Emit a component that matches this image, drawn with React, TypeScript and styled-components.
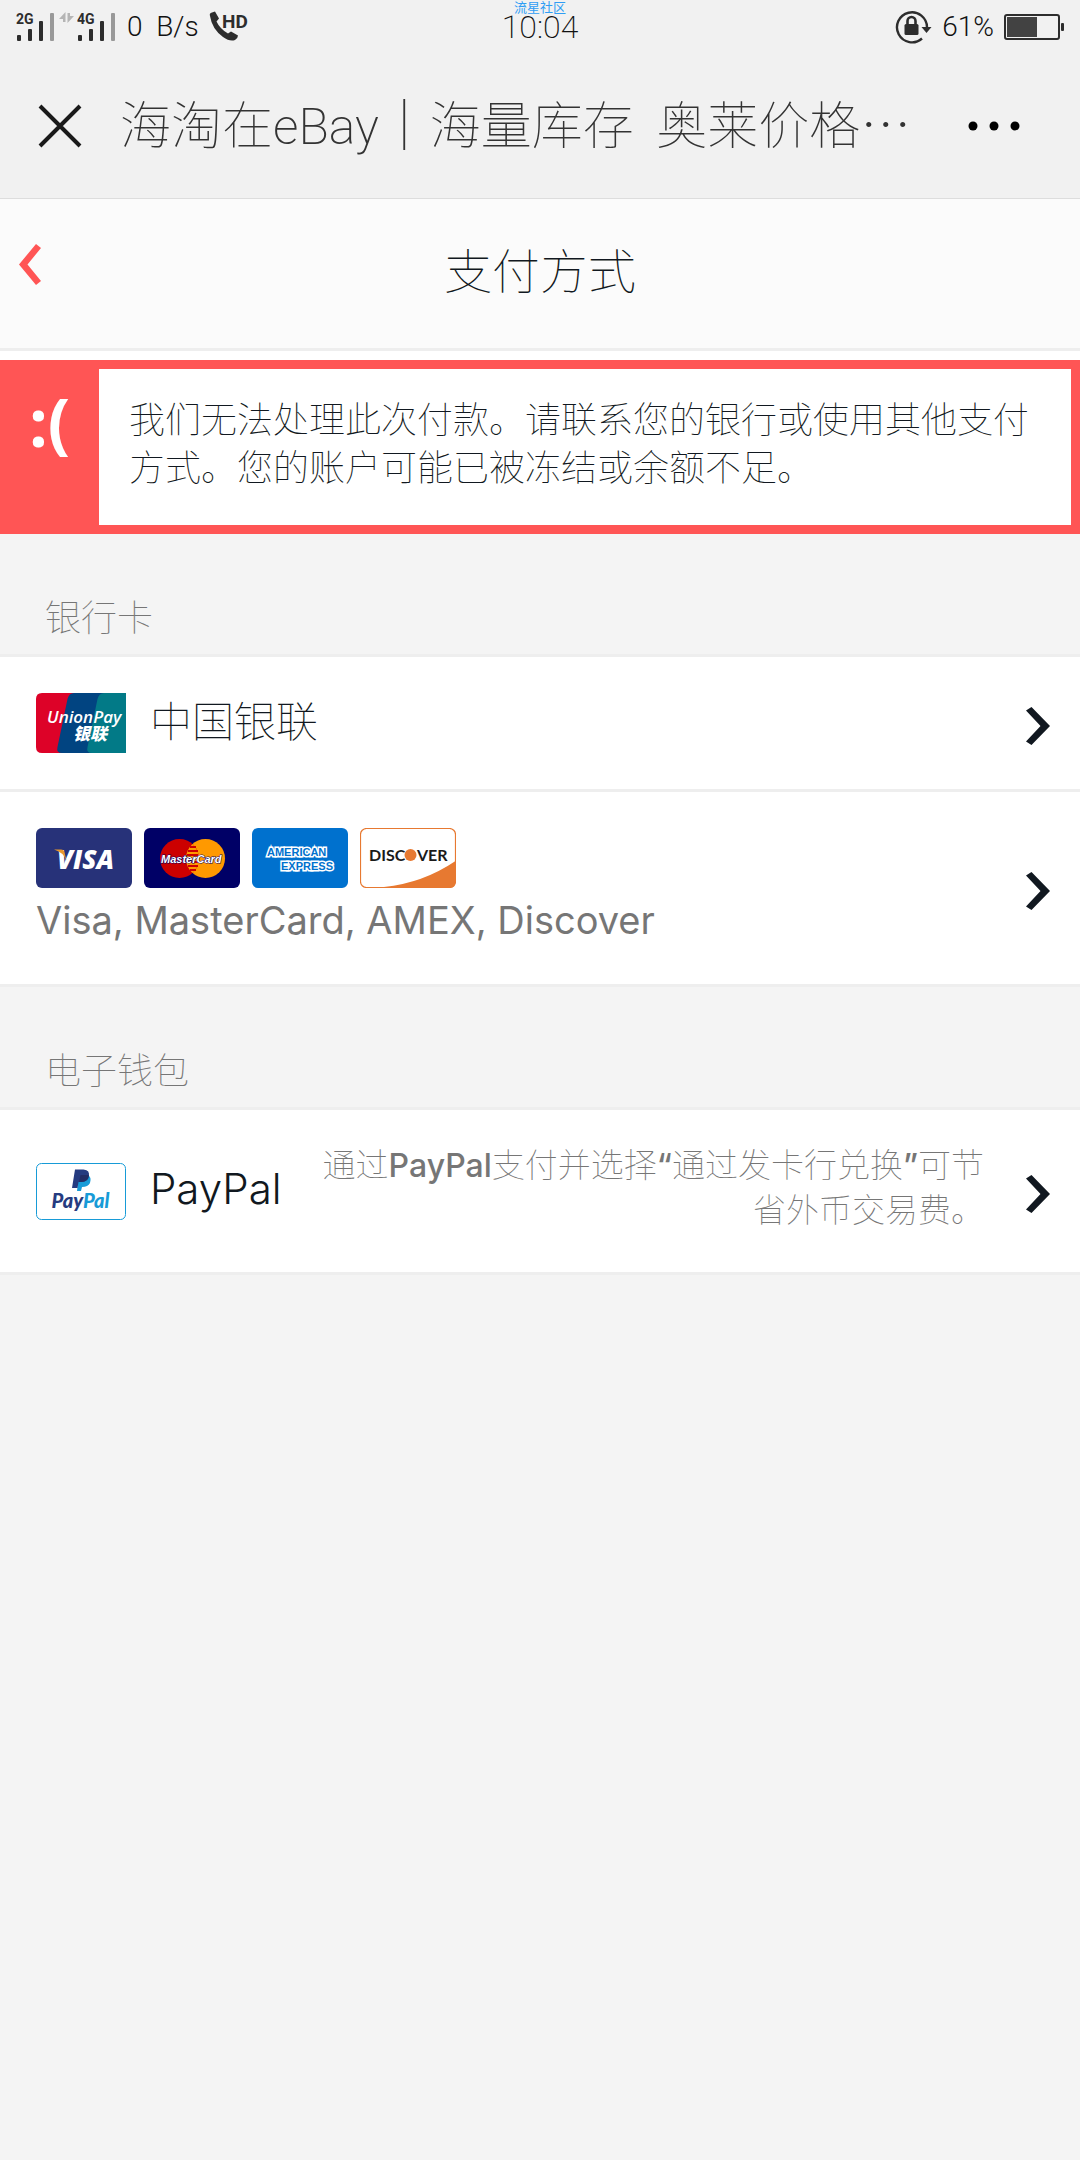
import React from "react";
import styled, { createGlobalStyle } from "styled-components";

const cjk = '"Noto Sans CJK SC", sans-serif';
const latin = 'Inter, "Noto Sans CJK SC", sans-serif';
const roboto = 'Roboto, "Noto Sans CJK SC", sans-serif';

const GlobalStyle = createGlobalStyle`
  *, *::before, *::after { box-sizing: border-box; }
  body {
    margin: 0;
    background: #f4f4f4;
    color: #111820;
    font-family: ${latin};
    font-weight: 100;
  }
  svg { display: block; flex: none; }
  h1, h2, p { margin: 0; font-weight: inherit; }
`;

const Page = styled.div`
  min-height: 100vh;
  background: #f4f4f4;
`;

const StatusBar = styled.div`
  display: grid;
  grid-template-columns: 1fr auto 1fr;
  height: 54px;
  padding: 0 16px;
  background: #f1f1f1;
  color: #111;
  font-family: ${roboto};
  font-size: 28px;
  font-weight: 300;
  line-height: 54px;
  white-space: pre;
`;

const StatusGroup = styled.div<{ $end?: boolean }>`
  display: flex;
  align-items: center;
  justify-content: ${(p) => (p.$end ? "flex-end" : "flex-start")};
  gap: 10px;
`;

const Clock = styled.div`
  position: relative;
  font-size: 32px;
  font-weight: 200;
`;

const Watermark = styled.span`
  position: absolute;
  top: 0;
  left: 50%;
  transform: translateX(-50%);
  color: #2f9df4;
  font-family: ${cjk};
  font-size: 13px;
  font-weight: 400;
  line-height: 13px;
`;

const BrowserBar = styled.header`
  display: flex;
  align-items: center;
  height: 145px;
  padding: 0 60px 0 36px;
  border-bottom: 1px solid #dddddd;
  background: #f1f1f1;
`;

const IconButton = styled.button`
  display: flex;
  align-items: center;
  justify-content: center;
  flex: none;
  padding: 0;
  border: 0;
  background: none;
  cursor: pointer;
`;

const PageTitle = styled.div`
  flex: 1;
  min-width: 0;
  padding: 0 0 3px 36px;
  color: #333;
  font-family: ${cjk};
  font-size: 51px;
  line-height: 72px;
  white-space: pre;
`;

const TitleLatin = styled.span`
  font-family: ${roboto};
  font-size: 50px;
  font-weight: 200;
`;

const TitleBar = styled.div`
  display: grid;
  grid-template-columns: 60px 1fr 60px;
  align-items: center;
  height: 152px;
  padding-bottom: 9px;
  border-bottom: 3px solid #eeeeee;
  background: #fbfbfb;
`;

const Heading = styled.h1`
  padding-bottom: 3px;
  font-family: ${cjk};
  font-size: 48px;
  line-height: 72px;
  text-align: center;
`;

const AlertWrap = styled.div`
  padding-top: 9px;
  background: #fff;
`;

const Alert = styled.div`
  display: flex;
  padding: 9px 9px 9px 0;
  background: #ff5555;
`;

const Face = styled.div`
  flex: none;
  width: 99px;
  padding-top: 10px;
  color: #fff;
  font-family: "Open Sans", sans-serif;
  font-size: 66px;
  font-weight: 700;
  line-height: 84px;
  text-align: center;
`;

const AlertText = styled.p`
  flex: 1;
  min-height: 156px;
  padding: 24px 30px;
  background: #fff;
  font-family: ${cjk};
  font-size: 36px;
  line-height: 48px;
`;

const SectionTitle = styled.h2`
  padding: 57px 45px 15px;
  border-bottom: 3px solid #eeeeee;
  color: #767676;
  font-family: ${cjk};
  font-size: 36px;
  line-height: 48px;
`;

const Row = styled.a<{ $pad: number }>`
  display: flex;
  align-items: center;
  justify-content: space-between;
  padding: ${(p) => p.$pad}px 30px ${(p) => p.$pad}px 36px;
  border-bottom: 3px solid #eeeeee;
  background: #fff;
  color: #111820;
  text-decoration: none;
`;

const Method = styled.div`
  display: flex;
  align-items: center;
  gap: 24px;
`;

const MethodName = styled.span`
  padding-bottom: 4px;
  font-size: 42px;
  font-weight: 300;
  line-height: 48px;
`;

const ThinName = styled(MethodName)`
  padding-bottom: 9px;
  font-family: ${cjk};
  font-weight: 100;
`;

const CardList = styled.div`
  display: flex;
  gap: 12px;
`;

const CardNames = styled.p`
  padding-top: 5px;
  padding-bottom: 1px;
  color: #767676;
  font-size: 38px;
  font-weight: 400;
  line-height: 54px;
`;

const Note = styled.p`
  flex: 1;
  padding: 0 42px 6px 36px;
  color: #767676;
  font-size: 33px;
  line-height: 45px;
  text-align: right;
`;

const NoteLatin = styled.span`
  font-size: 32px;
  font-weight: 500;
`;

const Signals = styled.div`
  display: flex;
  align-items: center;
  gap: 3px;
`;

const Signal = ({ label }: { label: string }) => (
  <svg width="40" height="30" viewBox="0 0 40 30" aria-hidden="true">
    <text x="0" y="12" fontFamily="Roboto, sans-serif" fontWeight="700" fontSize="14" fill="#2d2d2d">{label}</text>
    <rect x="1" y="23" width="4" height="6" rx="1" fill="#2d2d2d" />
    <rect x="12" y="17" width="4" height="12" rx="1" fill="#2d2d2d" />
    <rect x="23" y="9" width="4" height="20" rx="1" fill="#2d2d2d" />
    <rect x="34" y="1" width="4" height="28" rx="1" fill="#999" />
  </svg>
);

const DataArrows = () => (
  <svg width="15" height="30" viewBox="0 0 15 30" fill="#b5b5b5" aria-hidden="true">
    <path d="M6.500 0v10H4V7H0z M8.500 11V1H11v3h4z" />
  </svg>
);

const CallHD = () => (
  <svg width="44" height="32" viewBox="0 0 44 32" aria-hidden="true">
    <path d="M1 5 Q0 2 3 1.500 L6 0.500 L10 7.500 L7.500 10.500 Q11 18 19 22.500 L22 20.500 L29 24.500 Q29 27 26 29 Q21 31 14 26 Q3 18 1 5z" fill="#2d2d2d" />
    <text x="13" y="17" fontFamily="Roboto, sans-serif" fontWeight="700" fontSize="19" fill="#2d2d2d">HD</text>
  </svg>
);

const RotationLock = () => (
  <svg width="37" height="34" viewBox="0 0 37 34" aria-hidden="true">
    <path d="M32 17.500 A15 15 0 1 0 27 28.500" fill="none" stroke="#2d2d2d" strokeWidth="2.400" />
    <path d="M26.500 17h10l-5 6z" fill="#2d2d2d" />
    <rect x="9.500" y="14" width="14" height="11" rx="1.500" fill="#2d2d2d" />
    <path d="M12.500 14.500V11a4 4 0 0 1 8 0v3.500" fill="none" stroke="#2d2d2d" strokeWidth="2.600" />
  </svg>
);

const Battery = () => (
  <svg width="60" height="28" viewBox="0 0 60 28" aria-hidden="true">
    <rect x="1" y="2" width="54" height="24" rx="2" fill="none" stroke="#2d2d2d" strokeWidth="2" />
    <rect x="3" y="4" width="30" height="20" fill="#424242" />
    <rect x="57" y="10" width="3" height="8" rx="1" fill="#2d2d2d" />
  </svg>
);

const Chevron = () => (
  <svg width="24" height="44" viewBox="0 0 24 44" aria-hidden="true">
    <path d="M5.500 6 L24 25 L5.500 44 L0 40.500 L14.500 25 L0 9.500z" fill="#111820" />
  </svg>
);

const UnionPay = () => (
  <svg width="90" height="60" viewBox="0 0 90 60" role="img" aria-label="UnionPay">
    <path d="M6 0H40V60H6Q0 60 0 54V6Q0 0 6 0z" fill="#dd0228" />
    <path d="M38 0H70V60H26Q20 60 21.500 54L31.500 6Q33 0 38 0z" fill="#014481" />
    <path d="M68 0H90V60H56Q50 60 51.500 54L61.500 6Q63 0 68 0z" fill="#027a87" />
    <text x="11" y="30" fontFamily="Open Sans, sans-serif" fontWeight="600" fontStyle="italic" fontSize="17" fill="#fff">UnionPay</text>
    <text x="37" y="47" fontFamily="Noto Sans CJK SC, sans-serif" fontWeight="900" fontStyle="italic" fontSize="17" fill="#fff">银联</text>
  </svg>
);

const Visa = () => (
  <svg width="96" height="60" viewBox="0 0 96 60" role="img" aria-label="Visa">
    <rect width="96" height="60" rx="6" fill="#273279" />
    <text x="21" y="40.500" fontFamily="Open Sans, sans-serif" fontWeight="800" fontStyle="italic" fontSize="26" fill="#fff">VISA</text>
    <path d="M18 21.500h7q3 0 3.500 3l2 8Q27 24 18 21.500z" fill="#e8982e" />
  </svg>
);

const MasterCard = () => (
  <svg width="96" height="60" viewBox="0 0 96 60" role="img" aria-label="MasterCard">
    <rect width="96" height="60" rx="6" fill="#000066" />
    <circle cx="61.500" cy="30.500" r="19.500" fill="#ff9900" />
    <circle cx="35.500" cy="30.500" r="19.500" fill="#cc0000" />
    <path d="M48.500 16a19.500 19.500 0 0 1 0 29a19.500 19.500 0 0 1 0-29z" fill="#ff9900" />
    <path d="M46 19h6M44 23h10M43 27h11M43 34h12M44 38h10M46 42h6" stroke="#cc0000" strokeWidth="2" />
    <text x="17" y="35" fontFamily="Liberation Sans, sans-serif" fontWeight="700" fontStyle="italic" fontSize="11" fill="#fff" stroke="#000066" strokeWidth="1" paintOrder="stroke">MasterCard</text>
  </svg>
);

const Amex = () => (
  <svg width="96" height="60" viewBox="0 0 96 60" role="img" aria-label="American Express">
    <rect width="96" height="60" rx="6" fill="#0071ce" />
    <g fontFamily="Liberation Sans, sans-serif" fontWeight="700" fill="#0071ce" stroke="#fff" strokeWidth="3" paintOrder="stroke">
      <text x="15" y="28" fontSize="11">AMERICAN</text>
      <text x="29" y="42" fontSize="11">EXPRESS</text>
    </g>
  </svg>
);

const Discover = () => (
  <svg width="96" height="60" viewBox="0 0 96 60" role="img" aria-label="Discover">
    <rect x="0.500" y="0.500" width="95" height="59" rx="6" fill="#fff" stroke="#e77931" strokeWidth="1.200" />
    <path d="M24 59 Q63 55 95.500 33V54Q95.500 59.500 90 59.500H24z" fill="#e77931" />
    <g fontFamily="Lato, sans-serif" fontWeight="700" fontSize="16" fill="#1a1a1a">
      <text x="9" y="32.500">DISC</text>
      <text x="57" y="32.500">VER</text>
    </g>
    <circle cx="50.500" cy="27" r="6" fill="#e77931" />
  </svg>
);

const PayPal = () => (
  <svg width="90" height="57" viewBox="0 0 90 57" role="img" aria-label="PayPal">
    <rect x="0.500" y="0.500" width="89" height="56" rx="5" fill="#fff" stroke="#179bd7" />
    <path d="M43 11h8q5 3 3 9q-2 4-8 4l-1 4h-4z" fill="#179bd7" />
    <path d="M39 6.500h8.500q7 .5 5 7q-1.500 5.500-7.500 5.500h-2.500l-1 6H36z" fill="#253b80" />
    <path d="M44.500 12h8.500q0 7-8 7h-2z" fill="#222d65" />
    <g fontFamily="Lato, sans-serif" fontWeight="900" fontStyle="italic" fontSize="20">
      <text x="15.500" y="45"><tspan fill="#253b80">Pay</tspan><tspan fill="#179bd7">Pal</tspan></text>
    </g>
  </svg>
);

export default function App() {
  return (
    <Page lang="zh-CN">
      <GlobalStyle />
      <StatusBar>
        <StatusGroup>
          <Signals>
            <Signal label="2G" />
            <DataArrows />
            <Signal label="4G" />
          </Signals>
          <span>{"0  B/s"}</span>
          <CallHD />
        </StatusGroup>
        <Clock>
          10:04
          <Watermark>流星社区</Watermark>
        </Clock>
        <StatusGroup $end>
          <RotationLock />
          <span>61%</span>
          <Battery />
        </StatusGroup>
      </StatusBar>

      <BrowserBar>
        <IconButton type="button" aria-label="关闭">
          <svg width="48" height="48" viewBox="0 0 48 48">
            <path d="M4 4 L44 44 M44 4 L4 44" stroke="#1a1a1a" strokeWidth="4" />
          </svg>
        </IconButton>
        <PageTitle>
          海淘在<TitleLatin>eBay</TitleLatin>{"\uFF5C海量库存  奥莱价格…"}
        </PageTitle>
        <IconButton type="button" aria-label="更多">
          <svg width="52" height="10" viewBox="0 0 52 10">
            <circle cx="5" cy="5" r="4.500" />
            <circle cx="26" cy="5" r="4.500" />
            <circle cx="47" cy="5" r="4.500" />
          </svg>
        </IconButton>
      </BrowserBar>

      <TitleBar>
        <IconButton type="button" aria-label="返回">
          <svg width="22" height="50" viewBox="0 0 22 50">
            <path d="M17 0 L22 4 L8.500 20.500 L22 37 L17 41 L0 20.500z" fill="#ff5555" />
          </svg>
        </IconButton>
        <Heading>支付方式</Heading>
      </TitleBar>

      <AlertWrap>
        <Alert role="alert">
          <Face aria-hidden="true">:(</Face>
          <AlertText>
            我们无法处理此次付款。请联系您的银行或使用其他支付方式。您的账户可能已被冻结或余额不足。
          </AlertText>
        </Alert>
      </AlertWrap>

      <SectionTitle>银行卡</SectionTitle>
      <Row href="#unionpay" $pad={36}>
        <Method>
          <UnionPay />
          <ThinName>中国银联</ThinName>
        </Method>
        <Chevron />
      </Row>
      <Row href="#card" $pad={36}>
        <div>
          <CardList>
            <Visa />
            <MasterCard />
            <Amex />
            <Discover />
          </CardList>
          <CardNames>Visa, MasterCard, AMEX, Discover</CardNames>
        </div>
        <Chevron />
      </Row>

      <SectionTitle>电子钱包</SectionTitle>
      <Row href="#paypal" $pad={33}>
        <Method>
          <PayPal />
          <MethodName>PayPal</MethodName>
        </Method>
        <Note>
          通过<NoteLatin>PayPal</NoteLatin>支付并选择<NoteLatin>“</NoteLatin>通过发卡行兑换<NoteLatin>”</NoteLatin>可节省外币交易费。
        </Note>
        <Chevron />
      </Row>
    </Page>
  );
}
